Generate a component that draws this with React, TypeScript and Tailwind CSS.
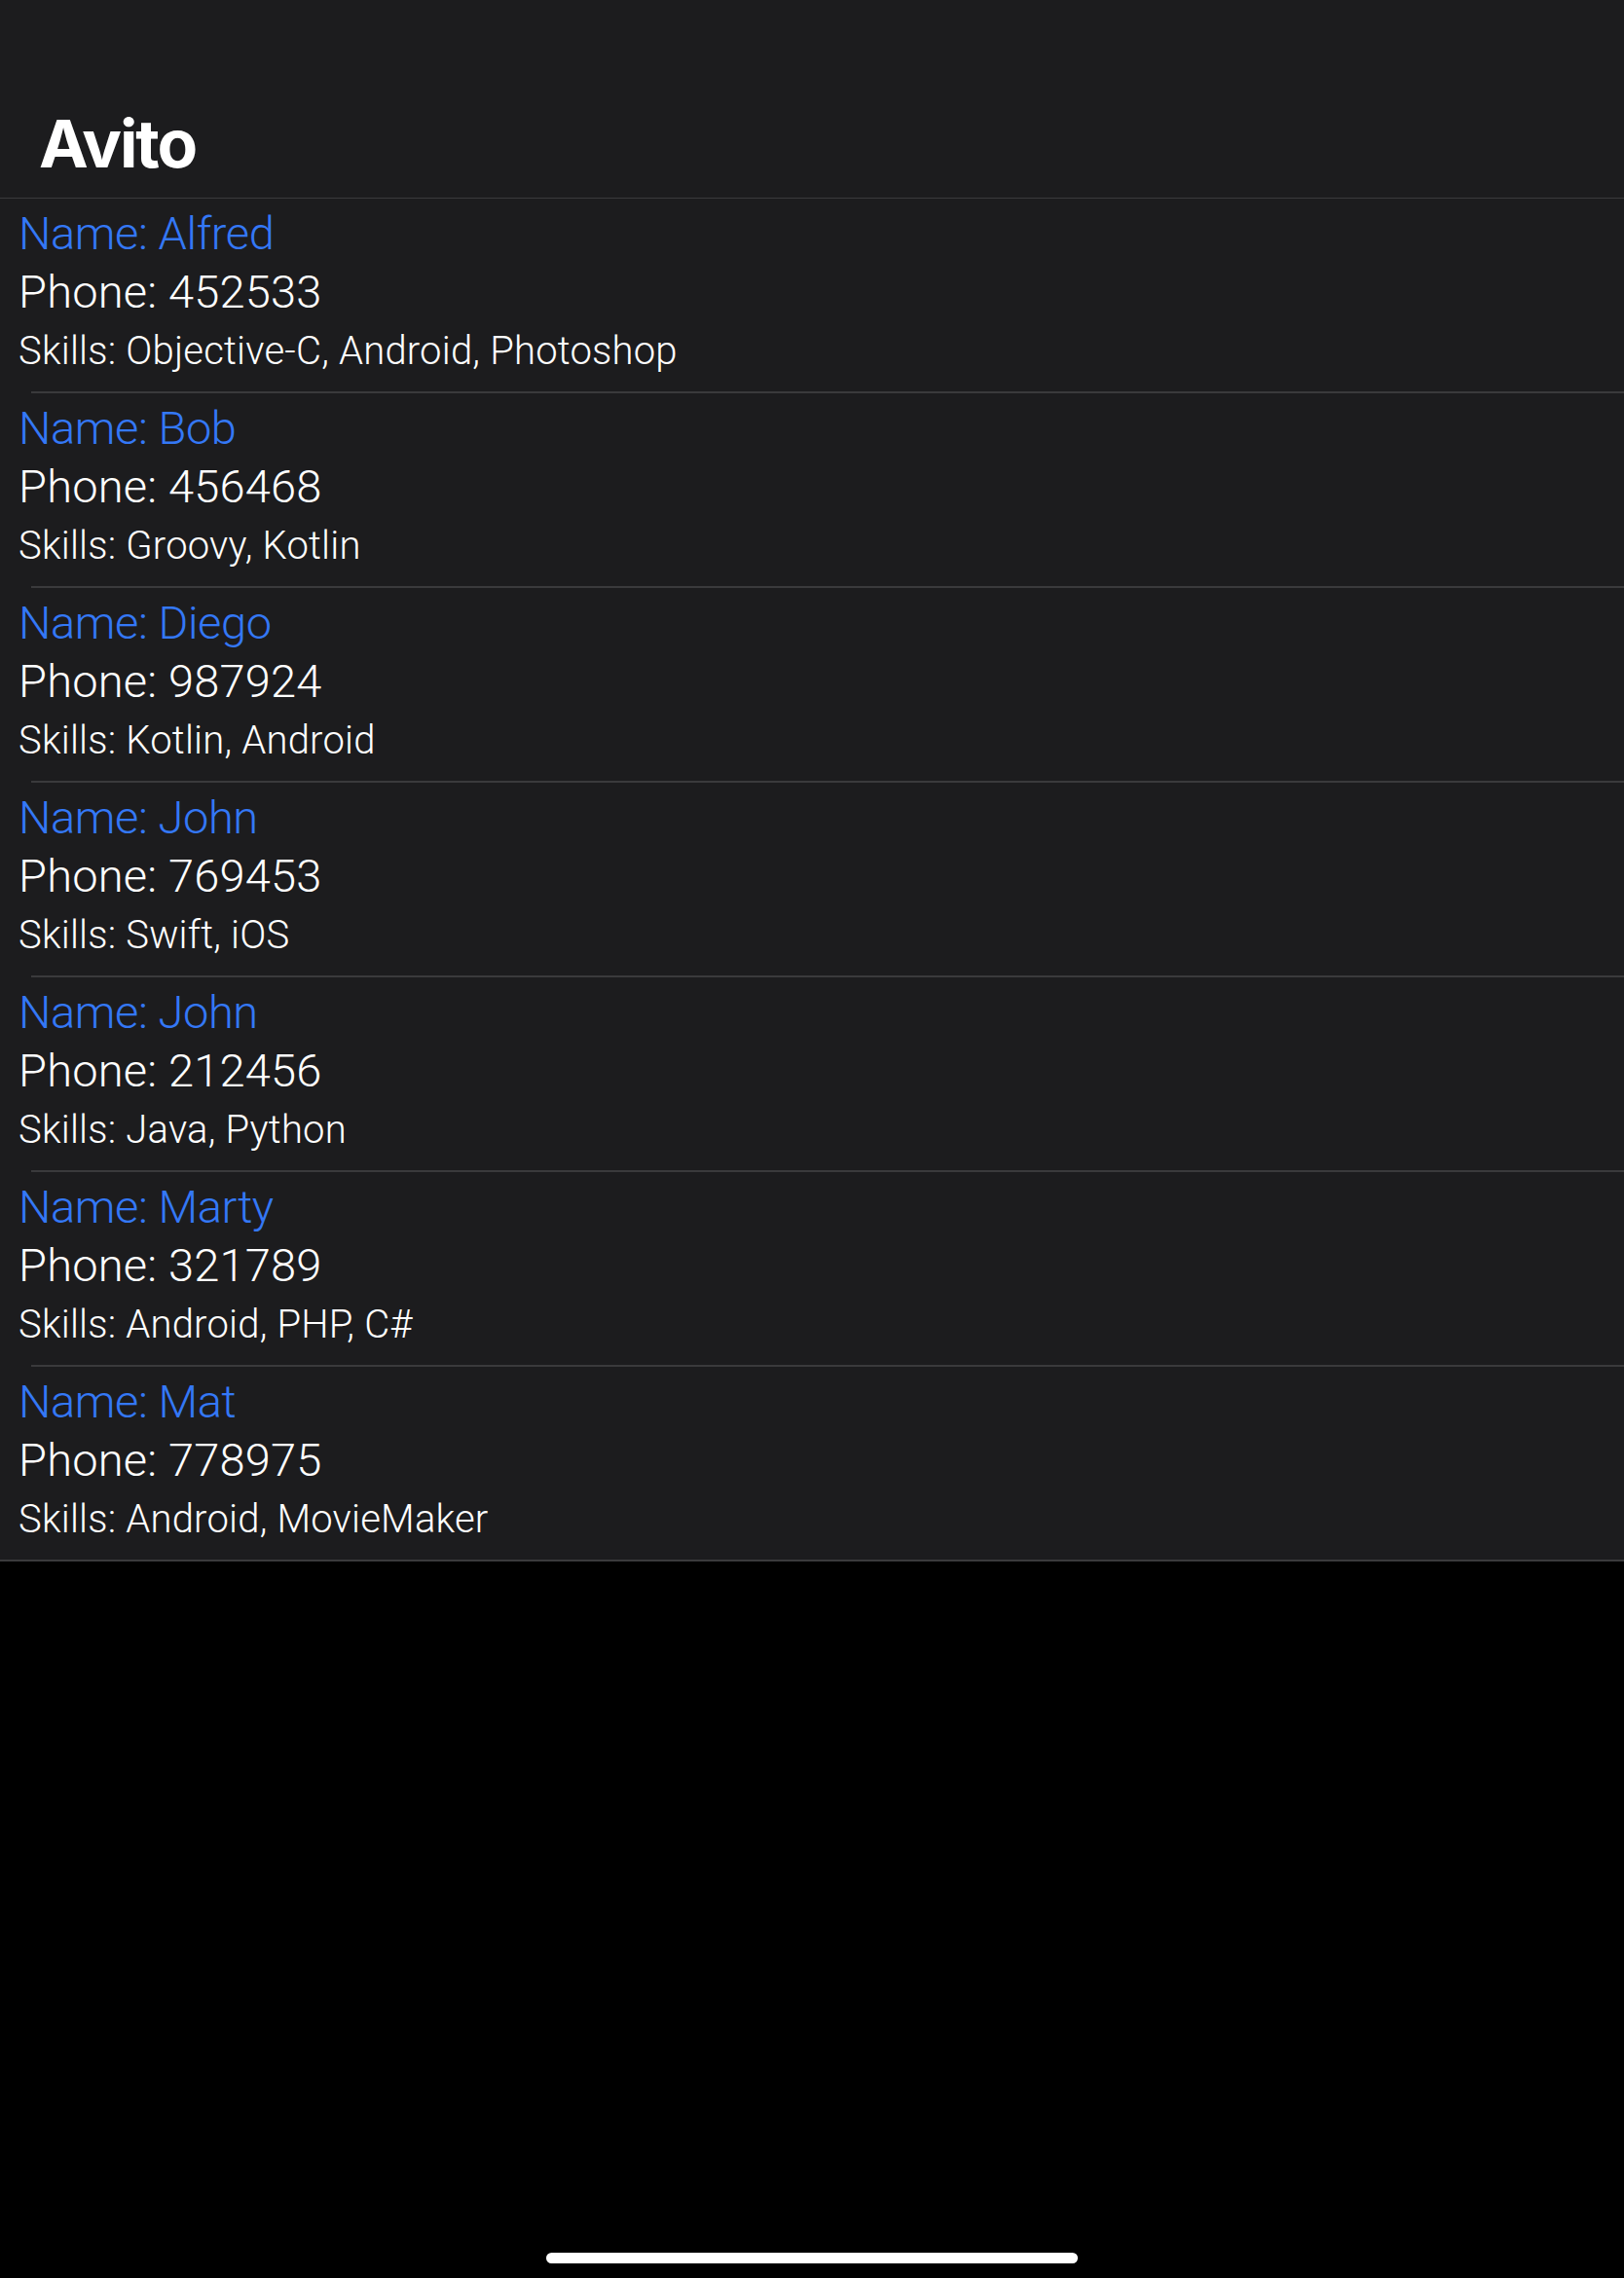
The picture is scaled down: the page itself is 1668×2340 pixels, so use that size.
import React from "react";

type Person = { name: string; phone: string; skills: string };

const people: Person[] = [
  { name: "Alfred", phone: "452533", skills: "Objective-C, Android, Photoshop" },
  { name: "Bob", phone: "456468", skills: "Groovy, Kotlin" },
  { name: "Diego", phone: "987924", skills: "Kotlin, Android" },
  { name: "John", phone: "769453", skills: "Swift, iOS" },
  { name: "John", phone: "212456", skills: "Java, Python" },
  { name: "Marty", phone: "321789", skills: "Android, PHP, C#" },
  { name: "Mat", phone: "778975", skills: "Android, MovieMaker" },
];

export default function App() {
  return (
    <div
      className="w-[1668px] h-[2340px] bg-black flex flex-col relative overflow-hidden"
      style={{ fontFamily: "Roboto, 'Noto Sans', sans-serif" }}
    >
      <header className="h-[204px] bg-[#1c1c1e] border-b border-[#3a3a3c] pl-[40px] pt-[113px]">
        <h1
          className="text-[68px] leading-[68px] font-bold text-white tracking-[-2px]"
          style={{ fontFamily: "Inter, Roboto, sans-serif" }}
        >
          Avito
        </h1>
      </header>
      <ul className="bg-[#1c1c1e]">
        {people.map((p, i) => (
          <li key={i} className="h-[200px] flex flex-col">
            <div className="flex-1 pl-[19px] pt-[6px] font-light">
              <div className="text-[47px] leading-[60px] text-[#3478f6] tracking-[-0.4px]">Name: {p.name}</div>
              <div className="text-[47px] leading-[60px] text-white tracking-[0.2px]">Phone: {p.phone}</div>
              <div className="text-[40px] leading-[62px] text-white tracking-[0.2px]">Skills: {p.skills}</div>
            </div>
            <div
              className={
                i === people.length - 1
                  ? "h-[2px] bg-[#3a3a3c]"
                  : "h-[2px] ml-[32px] bg-[#3a3a3c]"
              }
            />
          </li>
        ))}
      </ul>
      <div className="flex-1" />
      <div className="flex justify-center pb-[15px]">
        <div className="w-[546px] h-[11px] rounded-full bg-white" />
      </div>
    </div>
  );
}
